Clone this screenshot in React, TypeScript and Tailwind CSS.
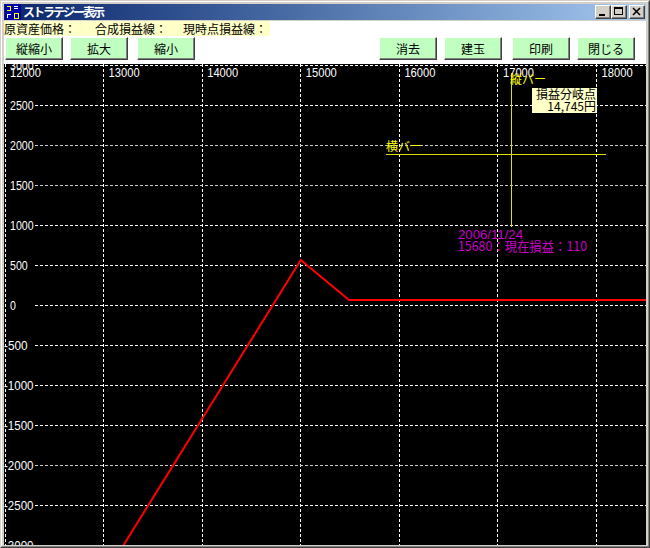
import React from "react";

const JP = "'Noto Sans CJK JP', 'Noto Sans', sans-serif";
const NUM = "'Liberation Sans', Arial, sans-serif";

const xOf = (v: number) => 1 + (v - 12000) * 0.0986;
const yOf = (v: number) => 241.3 - v * 0.08;

const xTicks = [12000, 13000, 14000, 15000, 16000, 17000, 18000];
const yTicks = [3000, 2500, 2000, 1500, 1000, 500, 0, -500, -1000, -1500, -2000, -2500, -3000];

function GreenButton({ label }: { label: string }) {
  return (
    <button className="w-[58px] h-[23px] bg-[#c0ffc0] border border-t-white border-l-white border-r-[#404040] border-b-[#404040] shadow-[inset_-1px_-1px_0_#808080] text-[12px] leading-none text-black flex items-center justify-center">
      {label}
    </button>
  );
}

function CaptionButton({ kind }: { kind: "min" | "max" | "close" }) {
  return (
    <div className="w-[16px] h-[14px] bg-[#d4d0c8] border border-t-white border-l-white border-r-[#404040] border-b-[#404040] shadow-[inset_-1px_-1px_0_#808080] flex items-center justify-center">
      <svg width="14" height="12" viewBox="0 0 14 12" shapeRendering="crispEdges">
        {kind === "min" && <rect x="3" y="8" width="6" height="2" fill="#000" />}
        {kind === "max" && (
          <g fill="none" stroke="#000">
            <rect x="2.5" y="1.5" width="8" height="7" />
            <line x1="2" y1="2.5" x2="11" y2="2.5" />
          </g>
        )}
        {kind === "close" && (
          <g stroke="#000" strokeWidth="1.6" shapeRendering="auto">
            <line x1="3" y1="2" x2="10" y2="9" />
            <line x1="10" y1="2" x2="3" y2="9" />
          </g>
        )}
      </svg>
    </div>
  );
}

function Chart() {
  const peakX = xOf(15000);
  return (
    <svg width="642" height="481" viewBox="0 0 642 481" className="block bg-black" shapeRendering="crispEdges">
      {/* grid */}
      {xTicks.map((v) => (
        <line
          key={"vx" + v}
          x1={Math.floor(xOf(v)) + 0.5}
          x2={Math.floor(xOf(v)) + 0.5}
          y1={0}
          y2={481}
          stroke="#fff"
          strokeDasharray="3 2"
        />
      ))}
      {yTicks.map((v) => (
        <line
          key={"hy" + v}
          x1={31}
          x2={642}
          y1={Math.round(yOf(v)) + 0.5}
          y2={Math.round(yOf(v)) + 0.5}
          stroke={v === 2000 || v === 1500 || v === -2000 ? "#c8c8c8" : "#fff"}
          strokeDasharray="3 2"
        />
      ))}

      {/* axis labels */}
      {yTicks.map((v) => {
        const s = String(v);
        return (
          <text
            key={"ly" + v}
            x={v < 0 ? 0 : 6}
            y={yOf(v) + 4.7}
            fill="#fff"
            fontFamily={NUM}
            fontSize="13"
            textLength={s.length * 5.9}
            lengthAdjust="spacingAndGlyphs"
          >
            {s}
          </text>
        );
      })}
      {xTicks.map((v) => (
        <text
          key={"lx" + v}
          x={xOf(v) + 5}
          y={13}
          fill="#fff"
          fontFamily={NUM}
          fontSize="13"
          textLength={31}
          lengthAdjust="spacingAndGlyphs"
        >
          {v}
        </text>
      ))}

      {/* profit line */}
      <polyline
        points={`114,490 ${peakX},196 345,236 642,236`}
        fill="none"
        stroke="#ff0000"
        strokeWidth="2"
        shapeRendering="auto"
      />

      {/* bars */}
      <line x1={507.5} x2={507.5} y1={9} y2={163} stroke="#e0e000" />
      <line x1={382} x2={602} y1={90.5} y2={90.5} stroke="#e0e000" />
      <text x={506} y={20} fill="#ffff00" fontFamily={JP} fontSize="12">
        縦バー
      </text>
      <text x={382} y={87} fill="#ffff00" fontFamily={JP} fontSize="12">
        横バー
      </text>

      {/* break-even box */}
      <rect x={528} y={24} width={65} height={25} fill="#ffffc8" />
      <text x={592} y={35} textAnchor="end" fill="#000" fontFamily={JP} fontSize="12">
        損益分岐点
      </text>
      <text x={592} y={47} textAnchor="end" fill="#000" fontFamily={JP} fontSize="12">
        14,745円
      </text>

      {/* current info */}
      <text
        x={454}
        y={175}
        fill="#c800c8"
        fontFamily={NUM}
        fontSize="13"
        textLength={65}
        lengthAdjust="spacingAndGlyphs"
      >
        2006/11/24
      </text>
      <text
        x={454}
        y={187}
        fill="#c800c8"
        fontFamily={JP}
        fontSize="13"
        textLength={129}
        lengthAdjust="spacingAndGlyphs"
      >
        15680：現在損益：110
      </text>
    </svg>
  );
}

export default function App() {
  return (
    <div
      className="w-[650px] h-[548px] bg-[#d4d0c8] border border-t-[#d4d0c8] border-l-[#d4d0c8] border-r-[#404040] border-b-[#404040]"
      style={{ fontFamily: JP }}
    >
      <div className="h-full border border-t-white border-l-white border-r-[#808080] border-b-[#808080] p-[2px] flex flex-col">
        {/* title bar */}
        <div className="h-[16px] flex items-center bg-linear-to-r from-[#0a246a] to-[#a6caf0] pr-[1px]">
          <svg width="16" height="16" viewBox="0 0 16 16" shapeRendering="crispEdges" className="ml-[1px]">
            <rect width="16" height="16" fill="#0000a8" />
            <rect x="2" y="2" width="4" height="1" fill="#ffff00" />
            <rect x="5" y="3" width="1" height="3" fill="#ffff00" />
            <rect x="2" y="6" width="4" height="1" fill="#ffff00" />
            <rect x="9" y="2" width="4" height="1" fill="#fff" />
            <rect x="9" y="4" width="4" height="1" fill="#fff" />
            <rect x="2" y="10" width="1" height="4" fill="#fff" />
            <rect x="2" y="10" width="4" height="1" fill="#fff" />
            <rect x="9" y="9" width="4" height="5" fill="none" stroke="#ffff00" />
          </svg>
          <span className="ml-[2px] text-white font-bold text-[12px] leading-none tracking-[-2px]">
            ストラテジー表示
          </span>
          <div className="flex-1" />
          <CaptionButton kind="min" />
          <CaptionButton kind="max" />
          <div className="w-[2px]" />
          <CaptionButton kind="close" />
        </div>

        {/* client */}
        <div className="mt-[1px] flex-1 bg-white flex flex-col">
          <div className="h-[15px] w-[266px] bg-[#ffffc8] flex items-center text-[12px] leading-none text-black">
            <span>原資産価格：</span>
            <span className="ml-[19px]">合成損益線：</span>
            <span className="ml-[16px]">現時点損益線：</span>
          </div>

          <div className="mt-[1px] h-[23px] flex pl-[1px] pr-[11px]">
            <GreenButton label="縦縮小" />
            <div className="w-[7px]" />
            <GreenButton label="拡大" />
            <div className="w-[9px]" />
            <GreenButton label="縮小" />
            <div className="flex-1" />
            <GreenButton label="消去" />
            <div className="w-[7px]" />
            <GreenButton label="建玉" />
            <div className="w-[10px]" />
            <GreenButton label="印刷" />
            <div className="w-[7px]" />
            <GreenButton label="閉じる" />
          </div>

          <div className="mt-[4px] flex-1 overflow-hidden bg-black">
            <Chart />
          </div>
        </div>
      </div>
    </div>
  );
}
